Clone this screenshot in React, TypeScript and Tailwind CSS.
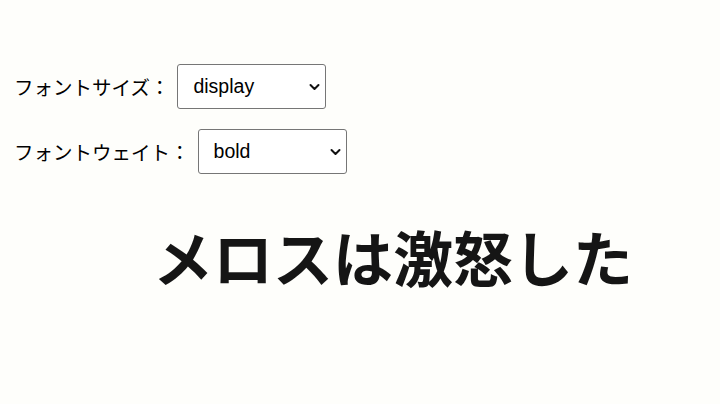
import { useState } from 'react'

const sizes = ['display', 'title', 'body', 'caption']
const weights = ['bold', 'normal', 'light']

function Chevron() {
  return (
    <svg
      className="pointer-events-none absolute right-[6px] top-1/2 -translate-y-1/2"
      width="11"
      height="8"
      viewBox="0 0 11 8"
      fill="none"
    >
      <path d="M1.5 2L5.5 6L9.5 2" stroke="#111" strokeWidth="2" strokeLinecap="round" strokeLinejoin="round" />
    </svg>
  )
}

interface FieldProps {
  label: string
  value: string
  options: string[]
  onChange: (v: string) => void
}

function Field({ label, value, options, onChange }: FieldProps) {
  return (
    <div className="flex items-center">
      <span className="text-[19.5px] text-black">{label}：</span>
      <div className="relative ml-[8px]">
        <select
          value={value}
          onChange={(e) => onChange(e.target.value)}
          className="h-[45px] w-[149px] appearance-none rounded-[3px] border border-[#767676] bg-white pl-[15px] text-[19.5px] text-black outline-none"
          style={{ fontFamily: '"Liberation Sans", Arial, sans-serif' }}
        >
          {options.map((o) => (
            <option key={o} value={o}>
              {o}
            </option>
          ))}
        </select>
        <Chevron />
      </div>
    </div>
  )
}

export default function App() {
  const [size, setSize] = useState('display')
  const [weight, setWeight] = useState('bold')

  return (
    <div
      className="h-[404px] w-[720px] overflow-hidden bg-[#fefefb] pl-[14px] pt-[64px]"
      style={{ fontFamily: '"Noto Sans CJK JP", "Noto Sans", sans-serif' }}
    >
      <Field label="フォントサイズ" value={size} options={sizes} onChange={setSize} />
      <div className="mt-[20px]">
        <Field label="フォントウェイト" value={weight} options={weights} onChange={setWeight} />
      </div>
      <h1 className="ml-[139px] mt-[52px] text-[60px] font-bold leading-none text-[#151515]">
        メロスは激怒した
      </h1>
    </div>
  )
}
